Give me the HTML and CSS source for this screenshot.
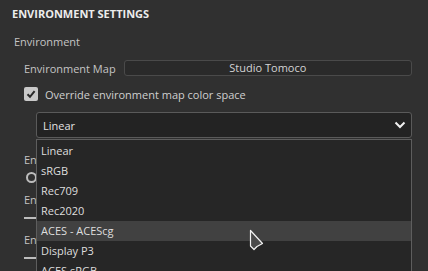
FILE: index.html
```html
<!DOCTYPE html>
<html lang="en">
<head>
    <meta charset="UTF-8">
    <title>Environment Settings</title>
    <link rel="stylesheet" href="styles.css">
</head>
<body>
    <div class="panel">
        <div class="panel-title">ENVIRONMENT SETTINGS</div>
        <div class="group-label">Environment</div>

        <div class="prop-row">
            <span class="prop-label">Environment Map</span>
            <div class="asset-field">Studio Tomoco</div>
        </div>

        <div class="check-row">
            <span class="checkbox">
                <svg width="14" height="14" viewBox="0 0 14 14"><path d="M3.5 7.2 L6 9.8 L10.6 4.2" fill="none" stroke="#2a2a2a" stroke-width="2"/></svg>
            </span>
            <span class="check-label">Override environment map color space</span>
        </div>

        <div class="select-wrap">
            <div class="select">
                <span>Linear</span>
                <svg class="chevron" width="12" height="8" viewBox="0 0 12 8"><path d="M1.5 1.5 L6 6 L10.5 1.5" fill="none" stroke="#f0f0f0" stroke-width="2"/></svg>
            </div>
            <ul class="dropdown">
                <li>Linear</li>
                <li>sRGB</li>
                <li>Rec709</li>
                <li>Rec2020</li>
                <li class="hover">ACES - ACEScg</li>
                <li>Display P3</li>
                <li>ACES sRGB</li>
            </ul>
        </div>

        <div class="under">
            <div class="prop-label under-label">Environment Rotation Mode</div>
            <div class="radio-row"><span class="radio"></span></div>
            <div class="prop-label under-label">Environment Intensity</div>
            <div class="slider-row"><span class="slider"></span></div>
            <div class="prop-label under-label">Environment Exposure</div>
            <div class="slider-row"><span class="slider"></span></div>
        </div>
    </div>

    <svg class="cursor" width="16" height="22" viewBox="0 0 16 22">
        <path d="M1.5 1.5 L1.5 17 L5 20.5 L8 17.5 L13.5 14.5 Z" fill="#4a4a4a" stroke="#f2f2f2" stroke-width="1.2" stroke-linejoin="round"/>
    </svg>
</body>
</html>
```

FILE: styles.css
```css
body {
    margin: 0;
    background: #303030;
    font-family: 'Open Sans', 'Noto Sans', sans-serif;
    font-size: 11px;
    color: #d8d8d8;
    height: 271px;
    overflow: hidden;
}

.panel {
    padding: 6px 16px 0 12px;
}

.panel-title {
    font-weight: 700;
    line-height: 16px;
    color: #ececec;
}

.group-label {
    margin-top: 12px;
    margin-left: 2px;
    line-height: 16px;
    color: #c4c4c4;
}

.prop-row {
    display: flex;
    align-items: center;
    gap: 8px;
    margin-top: 10px;
    margin-left: 12px;
    height: 16px;
}

.prop-label {
    color: #c4c4c4;
    white-space: nowrap;
}

.asset-field {
    flex: 1;
    height: 14px;
    line-height: 14px;
    text-align: center;
    background: #2a2a2a;
    border: 1px solid #4a4a4a;
    border-radius: 3px;
    color: #d4d4d4;
}

.check-row {
    display: flex;
    align-items: center;
    gap: 7px;
    margin-top: 8px;
    margin-left: 12px;
    height: 20px;
}

.checkbox {
    width: 14px;
    height: 14px;
    border-radius: 2px;
    background: #c9c9c9;
    display: flex;
}

.check-label {
    color: #cfcfcf;
}

.select-wrap {
    position: relative;
    margin-top: 8px;
    margin-left: 24px;
}

.select {
    height: 24px;
    display: flex;
    align-items: center;
    justify-content: space-between;
    padding: 0 4px 0 6px;
    background: #232323;
    border: 1px solid #5a5a5a;
    border-radius: 3px;
    color: #e2e2e2;
}

.chevron {
    margin-right: 1px;
}

.dropdown {
    position: absolute;
    top: 27px;
    left: 0;
    right: 0;
    margin: 0;
    padding: 1px 0 0 0;
    list-style: none;
    background: #262626;
    border: 1px solid #5e5e5e;
    border-bottom: none;
    height: 140px;
    z-index: 2;
}

.dropdown li {
    height: 20px;
    line-height: 20px;
    padding-left: 4px;
    color: #dedede;
    white-space: nowrap;
    overflow: hidden;
}

.dropdown li.hover {
    background: #414141;
}

/* rows hidden behind the open popup */
.under {
    margin-left: 12px;
    padding-top: 12px;
}

.under-label {
    line-height: 20px;
    width: 12px;
    overflow: hidden;
}

.radio-row {
    height: 14px;
    display: flex;
    align-items: center;
    padding-left: 2px;
    margin-bottom: 6px;
}

.radio {
    width: 7px;
    height: 7px;
    border: 2px solid #bdbdbd;
    border-radius: 50%;
}

.slider-row {
    height: 14px;
    display: flex;
    align-items: center;
    margin-top: 1px;
    margin-bottom: 5px;
}

.slider {
    width: 12px;
    height: 2px;
    background: #bdbdbd;
}

.cursor {
    position: absolute;
    left: 249px;
    top: 229px;
    z-index: 3;
}
```
